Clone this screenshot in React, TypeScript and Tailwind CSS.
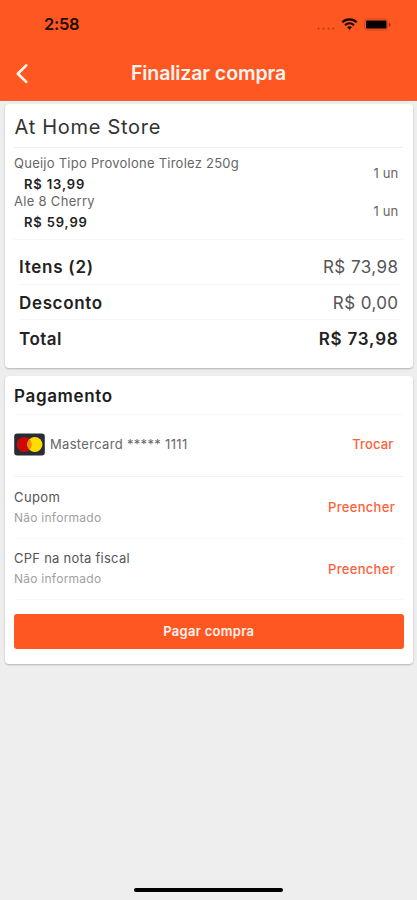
import type { ReactNode } from "react";

const products = [
  { name: "Queijo Tipo Provolone Tirolez 250g", price: "R$ 13,99", quantity: "1 un", tracking: "tracking-[0.25px]" },
  { name: "Ale 8 Cherry", price: "R$ 59,99", quantity: "1 un", tracking: "tracking-[0.3px]" },
];

function StatusBar() {
  return (
    <div className="flex h-[47px] items-center justify-between pt-[2px] pr-[26px] pl-[44px] text-[#240c04]">
      <span className="text-[16.5px] leading-none font-semibold tracking-[-0.3px]">2:58</span>
      <div className="flex items-center">
        <svg width="75" height="16" viewBox="0 0 75 16" fill="none">
          <g fill="#b33c18">
            <circle cx="2.5" cy="11.5" r="1" />
            <circle cx="7.5" cy="11.5" r="1" />
            <circle cx="12.5" cy="11.5" r="1" />
            <circle cx="17.2" cy="11.5" r="1" />
          </g>
          <g stroke="#160602" strokeWidth="2.2">
            <path d="M26.3 5.3C30.3 1.4 36.7 1.4 40.7 5.3" />
            <path d="M29 8.2C31.6 5.8 35.4 5.8 38 8.2" />
          </g>
          <path d="M31.1 10.1Q33.5 8.4 35.9 10.1L33.5 12.9Z" fill="#160602" />
          <rect x="48.5" y="2" width="23" height="11" rx="2.6" stroke="#d0451c" />
          <rect x="50" y="3.5" width="20.5" height="8" rx="1.2" fill="#080100" />
          <path d="M73 5.5Q76 7.7 73 10Z" fill="#8c2c12" />
        </svg>
      </div>
    </div>
  );
}

function Card({ className, children }: { className: string; children: ReactNode }) {
  return (
    <section className={`ml-[4.5px] w-[408px] rounded-[4px] bg-white px-[9.5px] shadow-[0_1px_2px_rgba(0,0,0,0.25)] ${className}`}>
      {children}
    </section>
  );
}

function MastercardIcon() {
  return (
    <svg className="mr-[5px] mb-[1px]" width="31" height="23" viewBox="0 0 31 23">
      <rect x="0.2" y="0.5" width="30.6" height="22" rx="3" fill="#282c35" />
      <circle cx="10.2" cy="11.5" r="7.6" fill="#cc0808" />
      <circle cx="20.8" cy="11.5" r="7.6" fill="#ffdc00" />
      <path d="M15.5 6.05A7.6 7.6 0 0 0 15.5 16.95A7.6 7.6 0 0 0 15.5 6.05Z" fill="#ee8c00" />
    </svg>
  );
}

function Field({ label, tracking, className }: { label: string; tracking: string; className: string }) {
  return (
    <div className={`flex items-center justify-between border-b border-[#f8f8f8] pr-[8px] ${className}`}>
      <div>
        <div className={`h-[21px] text-[13px] leading-[20px] text-[#555] ${tracking}`}>{label}</div>
        <div className="h-[21px] text-[12px] leading-[20px] tracking-[0.25px] text-[#a0a0a0]">Não informado</div>
      </div>
      <button className="pt-[1px] text-[13px] font-medium tracking-[0.3px] text-[#ff6039]">Preencher</button>
    </div>
  );
}

export default function App() {
  return (
    <main className="flex h-[900px] w-[417px] flex-col bg-[#eee] font-['Inter','Liberation_Sans',sans-serif]">
      <header className="h-[101px] shrink-0 border-b border-[#e96337] bg-[#ff5722]">
        <StatusBar />
        <div className="grid h-[53px] grid-cols-[40px_1fr_40px] items-center">
          <svg className="ml-[15px]" width="14" height="22" viewBox="0 0 14 22" fill="none" stroke="#fff4ef" strokeWidth="2.7" strokeLinecap="round" strokeLinejoin="round">
            <path d="M11.2 2.4L2.8 10.7L11.2 18.9" />
          </svg>
          <h1 className="text-center text-[19.5px] leading-none font-semibold tracking-[-0.08px] text-[#fff4f0]">Finalizar compra</h1>
        </div>
      </header>

      <Card className="mt-[3px] h-[264px] shrink-0">
        <h2 className="h-[44px] border-b border-[#eee] pt-[1px] pl-[0.5px] text-[20px] leading-[45px] tracking-[0.72px] text-[#333]">At Home Store</h2>
        <div className="h-[92px] border-b border-[#f6f6f6] pt-[5px]">
          {products.map((item) => (
            <div key={item.name} className="flex h-[38px] items-center justify-between pr-[4.5px] text-[13px] text-[#666]">
              <div>
                <div className={`h-[19px] leading-[20px] ${item.tracking}`}>{item.name}</div>
                <div className="h-[19px] pl-[10px] leading-[24px] font-semibold tracking-[0.85px] text-[#222]">{item.price}</div>
              </div>
              <span className="pt-[4px] tracking-[0.2px]">{item.quantity}</span>
            </div>
          ))}
        </div>
        <dl className="pt-[9px] pr-[4.5px] pl-[5px] text-[17px] text-[#222]">
          <div className="flex h-[36px] items-center justify-between border-b border-[#f6f6f6] pt-[3px]">
            <dt className="font-semibold tracking-[0.75px]">Itens (2)</dt>
            <dd className="tracking-[0.45px] text-[#555]">R$ 73,98</dd>
          </div>
          <div className="flex h-[35px] items-center justify-between border-b border-[#f6f6f6] pt-[3px]">
            <dt className="font-semibold tracking-[0.65px]">Desconto</dt>
            <dd className="tracking-[0.4px] text-[#555]">R$ 0,00</dd>
          </div>
          <div className="flex h-[37px] items-center justify-between pt-[2px] font-semibold">
            <dt className="tracking-[0.5px]">Total</dt>
            <dd className="tracking-[0.8px]">R$ 73,98</dd>
          </div>
        </dl>
      </Card>

      <Card className="mt-[8px] h-[288px] shrink-0">
        <h2 className="h-[39px] border-b border-[#f8f8f8] text-[17px] leading-[40px] font-semibold tracking-[0.65px] text-[#1d1d1d]">Pagamento</h2>
        <div className="flex h-[62px] items-center border-b border-[#f3f3f3] pr-[9.5px] pb-[1px] text-[13px]">
          <MastercardIcon />
          <span className="tracking-[0.32px] text-[#666]">Mastercard ***** 1111</span>
          <button className="ml-auto font-medium tracking-[0.15px] text-[#ff6039]">Trocar</button>
        </div>
        <Field label="Cupom" tracking="tracking-[0.4px]" className="h-[62px]" />
        <Field label="CPF na nota fiscal" tracking="tracking-[0.25px]" className="h-[61px]" />
        <button className="mt-[14px] h-[35px] w-[389.5px] rounded-[3px] bg-[#ff5722] text-[13px] font-semibold tracking-[0.3px] text-[#fff3ee]">Pagar compra</button>
      </Card>

      <div className="mx-auto mt-auto mb-[8px] h-[4px] w-[149px] rounded-full bg-black" />
    </main>
  );
}
